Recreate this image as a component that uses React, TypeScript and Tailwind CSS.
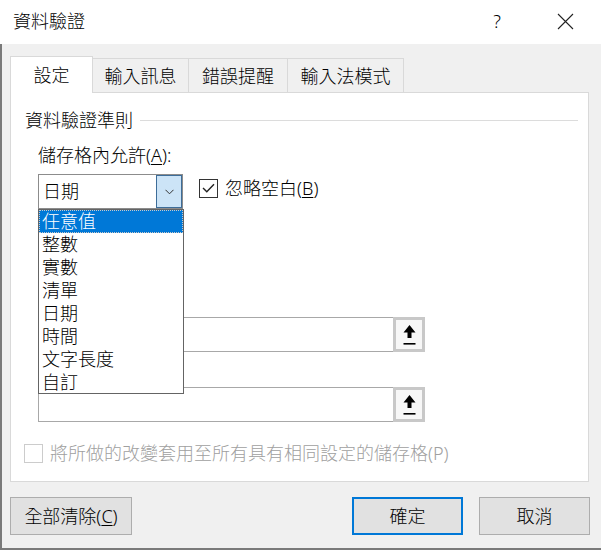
import React from 'react';

const font = "font-['Noto_Sans','Noto_Sans_CJK_TC',sans-serif]";

const listItems = ['任意值', '整數', '實數', '清單', '日期', '時間', '文字長度', '自訂'];

function RefButton() {
  return (
    <div className="w-[32px] h-[35px] border-[3px] border-[#c8c8c8] bg-[#f7f7f7] flex items-center justify-center">
      <svg width="13" height="20" viewBox="0 0 13 20">
        <path d="M6.5 0 L0.5 7.5 L4.5 7.5 L4.5 13 L8.5 13 L8.5 7.5 L12.5 7.5 Z" fill="#000" />
        <rect x="0.5" y="18" width="12" height="1.6" fill="#000" />
      </svg>
    </div>
  );
}

export default function App() {
  return (
    <div className={`w-[601px] h-[550px] bg-white text-black text-[18px] font-light overflow-hidden ${font}`}>
      {/* Title bar */}
      <div className="h-[44px] flex items-center bg-white">
        <span className="pl-[13px] leading-[24px] -mt-[2px]">資料驗證</span>
        <span className="ml-auto mr-[56px] leading-[24px] -mt-[2px] text-[18px]">?</span>
        <svg className="mr-[27px] -mt-[2px]" width="17" height="17" viewBox="0 0 17 17">
          <path d="M1 1 L16 16 M16 1 L1 16" stroke="#222" strokeWidth="1.1" fill="none" />
        </svg>
      </div>

      {/* Body */}
      <div className="h-[506px] bg-[#f0f0f0] border-l-2 border-b-2 border-[#7a7a7a] pl-[8px] pt-[12px]">
        {/* Tabs */}
        <div className="flex items-end">
          <div className="relative z-10 -mb-px w-[83px] h-[37px] bg-white border border-b-0 border-[#d9d9d9] flex items-center justify-center leading-[24px]">
            設定
          </div>
          <div className="w-[96px] h-[34px] border-t border-r border-[#d9d9d9] flex items-center justify-center leading-[24px]">
            輸入訊息
          </div>
          <div className="w-[99px] h-[34px] border-t border-r border-[#d9d9d9] flex items-center justify-center leading-[24px]">
            錯誤提醒
          </div>
          <div className="w-[116px] h-[34px] border-t border-r border-[#d9d9d9] flex items-center justify-center leading-[24px]">
            輸入法模式
          </div>
        </div>

        {/* Panel */}
        <div className="w-[579px] h-[390px] bg-white border border-[#d9d9d9] pt-[15px]">
          <div className="flex items-center pl-[14px]">
            <span className="leading-[24px]">資料驗證準則</span>
            <div className="flex-1 h-px bg-[#dcdcdc] ml-[7px] mr-[10px]" />
          </div>

          <div className="pl-[27px] mt-[11px] leading-[24px]">
            儲存格內允許(<span className="underline underline-offset-2">A</span>):
          </div>

          <div className="pl-[27px] mt-[7px] flex items-start">
            <div className="relative w-[145px] h-[35px] border border-[#8c8c8c] flex items-stretch">
              <span className="flex-1 pl-[4px] leading-[33px]">日期</span>
              <div className="w-[26px] bg-[#cce4f7] border border-[#3d6d99] flex items-center justify-center">
                <svg width="9" height="6" viewBox="0 0 9 6">
                  <path d="M0.5 0.8 L4.5 4.8 L8.5 0.8" stroke="#333" strokeWidth="1" fill="none" />
                </svg>
              </div>

              {/* Open dropdown list */}
              <div className="absolute left-[-1px] top-[34px] w-[146px] h-[185px] bg-white border border-[#646464] z-20">
                {listItems.map((item, i) => (
                  <div
                    key={item}
                    className={
                      i === 0
                        ? 'h-[23px] leading-[21px] pl-[2px] bg-[#0078d7] text-white border border-dotted border-[#c9c9c9]'
                        : 'h-[23px] leading-[23px] pl-[3px]'
                    }
                  >
                    {item}
                  </div>
                ))}
              </div>
            </div>

            <div className="ml-[16px] mt-[2px] flex items-center gap-[7px]">
              <div className="w-[19px] h-[19px] border border-[#333] bg-white flex items-center justify-center">
                <svg width="13" height="10" viewBox="0 0 13 10">
                  <path d="M1 5 L4.8 8.8 L12 1.2" stroke="#222" strokeWidth="1.4" fill="none" />
                </svg>
              </div>
              <span className="leading-[24px]">
                忽略空白(<span className="underline underline-offset-2">B</span>)
              </span>
            </div>
          </div>

          <div className="pl-[27px] mt-[108px] flex">
            <div className="w-[355px] h-[35px] border border-r-0 border-[#a8a8a8]" />
            <RefButton />
          </div>

          <div className="pl-[27px] mt-[35px] flex">
            <div className="w-[355px] h-[35px] border border-r-0 border-[#a8a8a8]" />
            <RefButton />
          </div>

          <div className="pl-[13px] mt-[19px] flex items-center gap-[7px]">
            <div className="w-[19px] h-[19px] border border-[#cccccc] bg-white" />
            <span className="leading-[24px] text-[#a0a0a0]">
              將所做的改變套用至所有具有相同設定的儲存格(P)
            </span>
          </div>
        </div>

        {/* Buttons */}
        <div className="mt-[15px] w-[580px] flex items-center">
          <button className="w-[122px] h-[38px] bg-[#e1e1e1] border border-[#adadad] leading-[24px]">
            全部清除(<span className="underline underline-offset-2">C</span>)
          </button>
          <button className="ml-auto w-[111px] h-[38px] bg-[#e1e1e1] border-2 border-[#0078d7] leading-[24px]">
            確定
          </button>
          <button className="ml-[16px] w-[111px] h-[38px] bg-[#e1e1e1] border border-[#adadad] leading-[24px]">
            取消
          </button>
        </div>
      </div>
    </div>
  );
}
